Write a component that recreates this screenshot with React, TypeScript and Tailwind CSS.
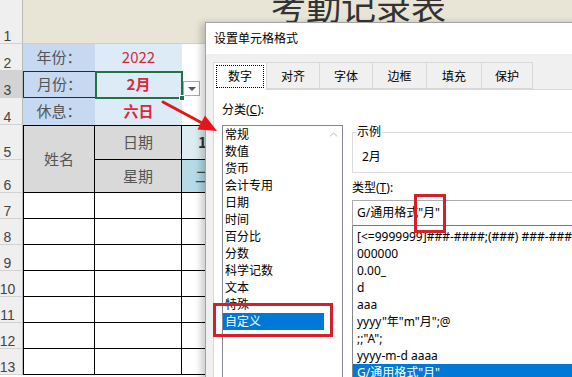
import { ChevronUp } from 'lucide-react';

const categories = ['常规', '数值', '货币', '会计专用', '日期', '时间', '百分比', '分数', '科学记数', '文本', '特殊', '自定义'];

const formats = [
    '[<=9999999]###-####;(###) ###-####',
    '000000',
    '0.00_',
    'd',
    'aaa',
    'yyyy"年"m"月";@',
    ';;"A";',
    'yyyy-m-d aaaa',
    'G/通用格式"月"',
];

const tabs = [
    { label: '数字', w: 'w-[54px]' },
    { label: '对齐', w: 'w-[54px]' },
    { label: '字体', w: 'w-[54px]' },
    { label: '边框', w: 'w-[55px]' },
    { label: '填充', w: 'w-[56px]' },
    { label: '保护', w: 'w-[52px]' },
];

function RowNum({ n, active = false }: { n: number; active?: boolean }) {
    return (
        <div
            className={`flex items-end justify-center border-b border-r border-b-[#d2d2d2] border-r-[#b9b9b9] pr-[7px] font-['Liberation_Sans',sans-serif] text-[14px] leading-[14px] text-[#444] ${
                active ? 'bg-[#d3d3d3]' : 'bg-[#efefef]'
            }`}
        >
            {n}
        </div>
    );
}

function Sheet() {
    const cell = 'flex items-center justify-center';
    const body = [7, 8, 9, 10, 11, 12, 13];
    return (
        <div className="grid grid-cols-[23px_72px_87px_1fr] grid-rows-[44px_27px_27px_27px_35px_33px_repeat(7,26px)] font-['Noto_Sans_CJK_SC',sans-serif] text-[15px]">
            {/* row 1: title */}
            <RowNum n={1} />
            <div className="col-span-3 border-b border-[#cfcfcf] bg-[#e8e4d6] pl-[248px]">
                <div className="-mt-[13px] text-[35px] leading-none text-[#333]">考勤记录表</div>
            </div>

            {/* rows 2-4 */}
            <RowNum n={2} />
            <div className={`${cell} bg-[#c6d9f0] text-[#555]`}>年份：</div>
            <div className={`${cell} bg-[#ddebf7] text-[#d8283c]`}>2022</div>
            <div className="bg-white" />

            <RowNum n={3} active />
            <div className={`${cell} border-y border-l border-[#2a2a2a] bg-[#c6d9f0] text-[#555]`}>月份：</div>
            <div className={`${cell} relative bg-[#ddebf7] font-bold text-[#d8283c]`}>
                2月
                <div className="absolute left-0 top-0 h-[28px] w-[88px] border-2 border-[#217346]" />
                <div className="absolute left-[84px] top-[24px] h-[6px] w-[6px] border border-white bg-[#217346]" />
            </div>
            <div className="bg-white">
                <div className="ml-[1px] mt-[10px] flex h-[15px] w-[17px] items-center justify-center border border-[#a9a9a9] bg-white">
                    <div className="h-0 w-0 border-x-[4px] border-t-[4px] border-x-transparent border-t-[#555]" />
                </div>
            </div>

            <RowNum n={4} />
            <div className={`${cell} bg-[#c6d9f0] text-[#555]`}>休息：</div>
            <div className={`${cell} bg-[#ddebf7] font-bold text-[#d8283c]`}>六日</div>
            <div className="bg-white" />

            {/* rows 5-6: table header */}
            <RowNum n={5} />
            <div className={`${cell} row-span-2 border border-black bg-[#d9d9d9] text-[#555]`}>姓名</div>
            <div className={`${cell} border-y border-r border-black bg-[#d9d9d9] text-[#555]`}>日期</div>
            <div className="flex items-center border-y border-black bg-[#dcecf0] pl-[16px] font-bold text-[#333]">1</div>

            <RowNum n={6} />
            <div className={`${cell} border-b border-r border-black bg-[#d9d9d9] text-[#555]`}>星期</div>
            <div className="flex items-center border-b border-black bg-[#b5dce6] pl-[13px] text-[#444]">二</div>

            {/* rows 7-13 */}
            {body.map((n) => (
                <div key={n} className="contents">
                    <RowNum n={n} />
                    <div className="border-x border-b border-black bg-white" />
                    <div className="border-b border-r border-black bg-white" />
                    <div className="border-b border-black bg-white" />
                </div>
            ))}
        </div>
    );
}

function FormatDialog() {
    return (
        <div className="absolute left-[205px] top-[22px] w-[380px] border border-[#a3a3a3] bg-[#f0f0f0] font-['Noto_Sans','Noto_Sans_CJK_SC',sans-serif] text-[12px] text-black shadow-[-4px_1px_7px_rgba(0,0,0,0.2)]">
            <div className="flex h-[31px] items-center bg-white pl-[8px]">设置单元格格式</div>

            <div className="pl-[7px] pt-[8px]">
                <div className="flex h-[27px] items-start">
                    {tabs.map((t, i) =>
                        i === 0 ? (
                            <div key={t.label} className={`relative z-10 flex h-[28px] ${t.w} border border-b-0 border-[#d9d9d9] bg-white px-[2px] pb-[2px] pt-[2px]`}>
                                <div className="flex flex-1 items-center justify-center border border-dotted border-black pt-[1px]">{t.label}</div>
                            </div>
                        ) : (
                            <div key={t.label} className={`-ml-px flex h-[27px] ${t.w} items-center justify-center border border-[#d9d9d9] bg-[#f0f0f0] pt-[2px]`}>
                                {t.label}
                            </div>
                        ),
                    )}
                </div>

                <div className="flex border-l border-t border-[#d9d9d9] bg-white pl-[8px] pt-[12px]">
                    {/* category */}
                    <div className="flex w-[121px] flex-col">
                        <div className="leading-[16px]">
                            分类(<span className="underline">C</span>):
                        </div>
                        <div className="mt-[7px] flex h-[260px] border border-[#828790]">
                            <div className="w-[101px]">
                                {categories.map((c) => (
                                    <div
                                        key={c}
                                        className={`h-[17px] pl-[2px] leading-[17px] ${c === '自定义' ? 'bg-[#0078d7] text-white' : ''}`}
                                    >
                                        {c}
                                    </div>
                                ))}
                            </div>
                            <div className="flex flex-1 justify-center pt-[2px] text-[#a6a6a6]">
                                <ChevronUp size={13} strokeWidth={1.5} />
                            </div>
                        </div>
                    </div>

                    {/* sample + type */}
                    <div className="ml-[9px] flex flex-1 flex-col pt-[30px]">
                        <div className="h-[41px] border border-[#dcdcdc]">
                            <div className="-mt-[9px] ml-[3px] w-fit bg-white px-[1px] leading-[16px]">示例</div>
                            <div className="mt-[9px] pl-[9px] leading-[16px]">2月</div>
                        </div>

                        <div className="mt-[7px] leading-[16px]">
                            类型(<span className="underline">T</span>):
                        </div>
                        <div className="mt-[4px] h-[26px] border border-[#adadad] border-b-[#7a7a7a] pl-[4px] leading-[24px]">
                            G/通用格式"月"
                        </div>
                        <div className="h-[200px] whitespace-nowrap border-x border-b border-[#828790] pt-[1.5px]">
                            {formats.map((f, i) => (
                                <div
                                    key={f}
                                    className={`h-[17px] pl-[4px] leading-[17px] ${i === formats.length - 1 ? 'bg-[#0078d7] text-white' : ''}`}
                                >
                                    {f}
                                </div>
                            ))}
                        </div>
                    </div>
                </div>
            </div>
        </div>
    );
}

export default function App() {
    return (
        <div className="relative h-[377px] w-[572px] overflow-hidden bg-white">
            <Sheet />
            <FormatDialog />

            {/* annotations */}
            <div className="absolute left-[213px] top-[303px] h-[34px] w-[120px] border-[3px] border-[#d3202b]" />
            <div className="absolute left-[414px] top-[194px] h-[39px] w-[32px] border-[3px] border-[#d3202b]" />
            <svg className="pointer-events-none absolute left-0 top-0" width="572" height="377" viewBox="0 0 572 377">
                <line x1="163" y1="102" x2="203" y2="123.5" stroke="#e3161e" strokeWidth="3" strokeLinecap="round" />
                <polygon points="217,131 197.5,129.5 205,115.5" fill="#e3161e" />
            </svg>
        </div>
    );
}
